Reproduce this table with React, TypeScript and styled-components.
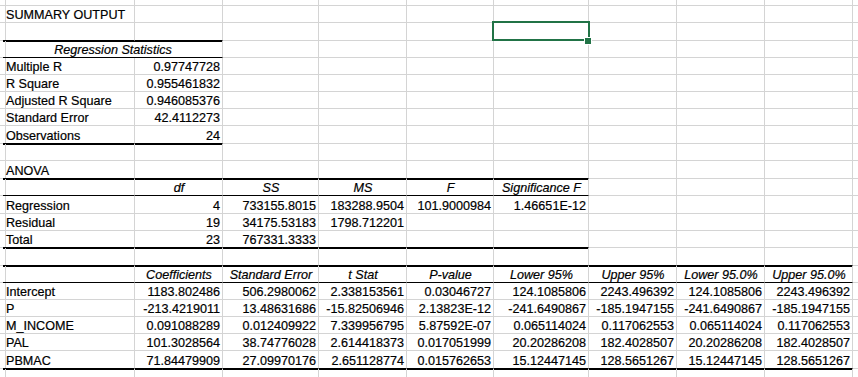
import React from 'react';
import styled, { createGlobalStyle, css } from 'styled-components';

const GlobalStyle = createGlobalStyle`
  html, body {
    margin: 0;
    padding: 0;
    background: #ffffff;
    overflow: hidden;
  }
  body {
    font-family: "Liberation Sans", Arial, sans-serif;
  }
`;

const COLS = [3, 132, 88, 96, 88, 87, 95, 88, 88, 88];
const ROWS = [6, 17, 18, 17, 17, 17, 17, 17, 18, 17, 18, 17, 18, 17, 17, 18, 17, 17, 17, 17, 17, 18, 17];
const GRID = '#d4d4d4';
const EXCEL_GREEN = '#217346';

type Edge = 'none' | 'thin' | 'thick';
type Align = 'left' | 'right' | 'center';

const Sheet = styled.div`
  position: relative;
  display: grid;
  grid-template-columns: ${COLS.map((c) => `${c}px`).join(' ')} 1fr;
  grid-template-rows: ${ROWS.map((r) => `${r}px`).join(' ')} 1fr;
  width: 858px;
  height: 377px;
  overflow: hidden;
  font-size: 12.6px;
  color: #000000;
  background: #ffffff;
  -webkit-text-stroke: 0.2px #000000;
`;

const Cell = styled.div<{ $align: Align; $italic?: boolean; $bottom: Edge; $span: number }>`
  box-sizing: border-box;
  grid-column: span ${(p) => p.$span};
  display: flex;
  align-items: flex-end;
  justify-content: ${(p) => (p.$align === 'left' ? 'flex-start' : p.$align === 'right' ? 'flex-end' : 'center')};
  padding: 0 2px 0 3px;
  border-right: 1px solid ${GRID};
  border-bottom: 1px solid ${(p) => (p.$bottom === 'none' ? GRID : '#000000')};
  ${(p) =>
    p.$bottom === 'thick' &&
    css`
      box-shadow: 0 1px 0 #000000;
    `}
  font-style: ${(p) => (p.$italic ? 'italic' : 'normal')};
  line-height: 13px;
  white-space: nowrap;
`;

const Selection = styled.div`
  position: absolute;
  left: 492px;
  top: 21px;
  width: 98px;
  height: 20px;
  box-sizing: border-box;
  border: 2px solid ${EXCEL_GREEN};
  pointer-events: none;
`;

const FillHandle = styled.div`
  position: absolute;
  left: 584px;
  top: 37px;
  width: 8px;
  height: 8px;
  box-sizing: border-box;
  background: ${EXCEL_GREEN};
  border: 1px solid #ffffff;
  pointer-events: none;
`;

type Spec = string | { t: string; i?: boolean; span?: number; a?: Align };
interface RowDef {
  cells: Spec[];
  edge?: Edge;
  reach?: number;
}

const h = (t: string): Spec => ({ t, i: true, a: 'center' });

const ROW_DEFS: RowDef[] = [
  { cells: [] },
  { cells: ['SUMMARY OUTPUT'] },
  { cells: [], edge: 'thick', reach: 2 },
  { cells: [{ t: 'Regression Statistics', i: true, span: 2, a: 'center' }], edge: 'thin', reach: 2 },
  { cells: ['Multiple R', '0.97747728'] },
  { cells: ['R Square', '0.955461832'] },
  { cells: ['Adjusted R Square', '0.946085376'] },
  { cells: ['Standard Error', '42.4112273'] },
  { cells: ['Observations', '24'], edge: 'thick', reach: 2 },
  { cells: [] },
  { cells: ['ANOVA'], edge: 'thick', reach: 6 },
  { cells: ['', h('df'), h('SS'), h('MS'), h('F'), h('Significance F')], edge: 'thin', reach: 6 },
  { cells: ['Regression', '4', '733155.8015', '183288.9504', '101.9000984', '1.46651E-12'] },
  { cells: ['Residual', '19', '34175.53183', '1798.712201'] },
  { cells: ['Total', '23', '767331.3333'], edge: 'thick', reach: 6 },
  { cells: [], edge: 'thick', reach: 9 },
  {
    cells: [
      '',
      h('Coefficients'),
      h('Standard Error'),
      h('t Stat'),
      h('P-value'),
      h('Lower 95%'),
      h('Upper 95%'),
      h('Lower 95.0%'),
      h('Upper 95.0%'),
    ],
    edge: 'thin',
    reach: 9,
  },
  {
    cells: ['Intercept', '1183.802486', '506.2980062', '2.338153561', '0.03046727', '124.1085806', '2243.496392', '124.1085806', '2243.496392'],
  },
  {
    cells: ['P', '-213.4219011', '13.48631686', '-15.82506946', '2.13823E-12', '-241.6490867', '-185.1947155', '-241.6490867', '-185.1947155'],
  },
  {
    cells: ['M_INCOME', '0.091088289', '0.012409922', '7.339956795', '5.87592E-07', '0.065114024', '0.117062553', '0.065114024', '0.117062553'],
  },
  {
    cells: ['PAL', '101.3028564', '38.74776028', '2.614418373', '0.017051999', '20.20286208', '182.4028507', '20.20286208', '182.4028507'],
  },
  {
    cells: ['PBMAC', '71.84479909', '27.09970176', '2.651128774', '0.015762653', '15.12447145', '128.5651267', '15.12447145', '128.5651267'],
    edge: 'thick',
    reach: 9,
  },
  { cells: [] },
];

const isNumber = (s: string) => /^-?[\d.]+(E-?\d+)?$/.test(s);

function renderRow(row: RowDef, r: number) {
  const out: React.ReactNode[] = [];
  const edge = row.edge ?? 'none';
  const reach = row.reach ?? 0;
  out.push(<Cell key={`${r}-lead`} $align="left" $bottom="none" $span={1} />);
  let c = 0;
  let idx = 0;
  while (c < 9) {
    const spec = row.cells[idx];
    idx += 1;
    let text = '';
    let italic = false;
    let span = 1;
    let align: Align = 'left';
    if (typeof spec === 'string') {
      text = spec;
      align = isNumber(spec) ? 'right' : 'left';
    } else if (spec) {
      text = spec.t;
      italic = !!spec.i;
      span = spec.span ?? 1;
      align = spec.a ?? 'left';
    }
    out.push(
      <Cell
        key={`${r}-${c}`}
        $align={align}
        $italic={italic}
        $span={span}
        $bottom={c < reach ? edge : 'none'}
      >
        {text}
      </Cell>
    );
    c += span;
  }
  out.push(<Cell key={`${r}-tail`} $align="left" $bottom="none" $span={1} />);
  return out;
}

export default function App() {
  return (
    <>
      <GlobalStyle />
      <Sheet>
        {ROW_DEFS.map((row, r) => renderRow(row, r))}
        <Selection />
        <FillHandle />
      </Sheet>
    </>
  );
}
